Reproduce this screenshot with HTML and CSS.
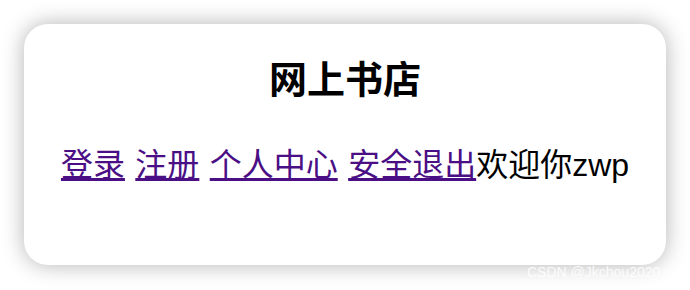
FILE: index.html
```html
<!DOCTYPE html>
<html lang="zh-CN">
<head>
<meta charset="utf-8">
<title>网上书店</title>
<link rel="stylesheet" href="styles.css">
</head>
<body>
<div class="page">
  <div class="card">
    <h1 class="title">网上书店</h1>
    <p class="nav"><a href="#" class="link">登录</a> <a href="#" class="link">注册</a> <a href="#" class="link">个人中心</a> <a href="#" class="link">安全退出</a>欢迎你zwp</p>
  </div>
</div>
<div class="watermark">CSDN @Jkchou2020</div>
</body>
</html>
```

FILE: styles.css
```css
html, body {
  margin: 0;
  padding: 0;
  background: #ffffff;
}

body {
  font-family: "Liberation Sans", "Noto Sans CJK SC", sans-serif;
  color: #000000;
  width: 690px;
  height: 290px;
  overflow: hidden;
  position: relative;
}

.page {
  padding: 24px;
}

.card {
  width: 642px;
  height: 241px;
  box-sizing: border-box;
  background: #ffffff;
  border-radius: 24px;
  box-shadow: 0 0 22px rgba(0, 0, 0, 0.3);
  padding-top: 33px;
  text-align: center;
}

.title {
  margin: 0;
  font-size: 38px;
  line-height: 46px;
  font-weight: bold;
}

.nav {
  margin: 43px 0 0;
  font-size: 32px;
  line-height: 38px;
  white-space: nowrap;
  word-spacing: 1.5px;
}

.link {
  color: #4b0f85;
  text-decoration: underline;
}

.watermark {
  position: absolute;
  left: 527px;
  top: 264px;
  font-family: "Liberation Sans", sans-serif;
  font-size: 14px;
  color: rgba(255, 255, 255, 0.85);
  white-space: nowrap;
}
```
